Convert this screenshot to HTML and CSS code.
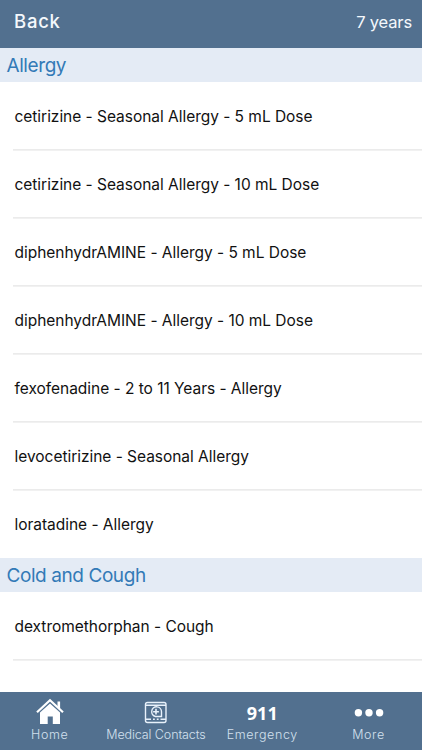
FILE: index.html
```html
<!DOCTYPE html>
<html lang="en">
<head>
  <meta charset="UTF-8" />
  <meta name="viewport" content="width=device-width, initial-scale=1.0"/>
  <title>Medications</title>
  <link rel="stylesheet" href="styles.css">
</head>
<body>

  <header class="top-bar">
    <a class="back"><span>Back</span></a>
    <div class="age"><span>7 years</span></div>
  </header>

  <main class="content">
    <h2><span>Allergy</span></h2>
    <ul class="med-list">
      <li><span>cetirizine - Seasonal Allergy - 5 mL Dose</span></li>
      <li><span>cetirizine - Seasonal Allergy - 10 mL Dose</span></li>
      <li><span>diphenhydrAMINE - Allergy - 5 mL Dose</span></li>
      <li><span>diphenhydrAMINE - Allergy - 10 mL Dose</span></li>
      <li><span>fexofenadine - 2 to 11 Years - Allergy</span></li>
      <li><span>levocetirizine - Seasonal Allergy</span></li>
      <li class="last"><span>loratadine - Allergy</span></li>
    </ul>

    <h2><span>Cold and Cough</span></h2>
    <ul class="med-list">
      <li><span>dextromethorphan - Cough</span></li>
    </ul>
  </main>

  <nav class="tab-bar">
    <a class="tab">
      <svg class="icon" width="30" height="28" viewBox="0 0 30 28">
        <path d="M5 15.500L15 6.500l10 9V27h-7.200v-7.500h-5.100V27H5z" fill="#fff"/>
        <path d="M2 15.200L15 3.200l13 12" fill="none" stroke="#fff" stroke-width="2.200"/>
        <path d="M22.500 4.500h2.600v7.500l-2.600-2.500z" fill="#fff"/>
      </svg>
      <span class="tab-label">Home</span>
    </a>
    <a class="tab">
      <svg class="icon" width="30" height="28" viewBox="0 0 30 28" fill="none" stroke="#e8f1fb" stroke-width="1.400">
        <rect x="4.500" y="5.500" width="20.500" height="20" rx="2"/>
        <path d="M4.500 8.200h20.500M4.500 22.300h5.500M12 22.300h1.800M15.800 22.300h1.800M19.500 22.300h5.500"/>
        <path d="M20.500 19.500h-6a4.900 4.900 0 1 1 6-4.800z"/>
        <path d="M15 11.800v5.800M12.100 14.700h5.800" stroke-width="1.600"/>
      </svg>
      <span class="tab-label long">Medical Contacts</span>
    </a>
    <a class="tab">
      <span class="icon number">911</span>
      <span class="tab-label">Emergency</span>
    </a>
    <a class="tab">
      <svg class="icon" width="30" height="28" viewBox="0 0 30 28" fill="#fff">
        <circle cx="4.400" cy="15.800" r="3.700"/>
        <circle cx="15" cy="15.800" r="3.700"/>
        <circle cx="25.600" cy="15.800" r="3.700"/>
      </svg>
      <span class="tab-label">More</span>
    </a>
  </nav>

</body>
</html>
```
FILE: styles.css
```css
body {
  margin: 0;
  height: 750px;
  display: flex;
  flex-direction: column;
  overflow: hidden;
  background: #fff;
  color: #111;
  font-family: Inter, "Liberation Sans", sans-serif;
}
.top-bar {
  height: 48px;
  flex: none;
  box-sizing: border-box;
  padding: 0 10px 3px 14px;
  display: flex;
  justify-content: space-between;
  align-items: center;
  background: #52708f;
  color: #f4f8fc;
}
.back {
  padding-bottom: 3px;
  font-size: 18.5px;
  font-weight: 500;
  letter-spacing: 0.75px;
}
.age {
  padding-bottom: 1px;
  font-size: 16.5px;
  letter-spacing: -0.15px;
}
.content {
  flex: 1;
}
h2 {
  height: 34px;
  margin: 0;
  padding-left: 6.5px;
  background: #e4ebf5;
  color: #337ab7;
  font-size: 19px;
  font-weight: 400;
  letter-spacing: -0.42px;
  line-height: 36px;
}
.med-list {
  list-style: none;
  margin: 0;
  padding: 0 0 0 13px;
}
.med-list li {
  height: 68px;
  box-sizing: border-box;
  padding-left: 1.5px;
  box-shadow: 0 1px #f1f1f1;
  border-bottom: 1px solid #ebebeb;
  font-size: 15.5px;
  letter-spacing: -0.03px;
  line-height: 70px;
}
.med-list .last {
  border-bottom: none;
  box-shadow: none;
}
.tab-bar {
  height: 58px;
  flex: none;
  display: grid;
  grid-template-columns: repeat(4, 106.3px);
  padding-right: 4px;
  margin-left: -3.5px;
  background: #52708f;
}
.tab {
  display: flex;
  flex-direction: column;
  align-items: center;
  padding-top: 5px;
}
.icon {
  height: 28px;
  flex: none;
}
.number {
  color: #fff;
  font-family: "Open Sans", sans-serif;
  font-size: 18px;
  font-weight: 700;
  line-height: 32px;
}
.tab-label {
  color: #d3e0ee;
  font-size: 12.5px;
  font-weight: 300;
  letter-spacing: 0.6px;
  line-height: 20px;
  white-space: nowrap;
}
.tab-label.long {
  letter-spacing: -0.1px;
}
```
